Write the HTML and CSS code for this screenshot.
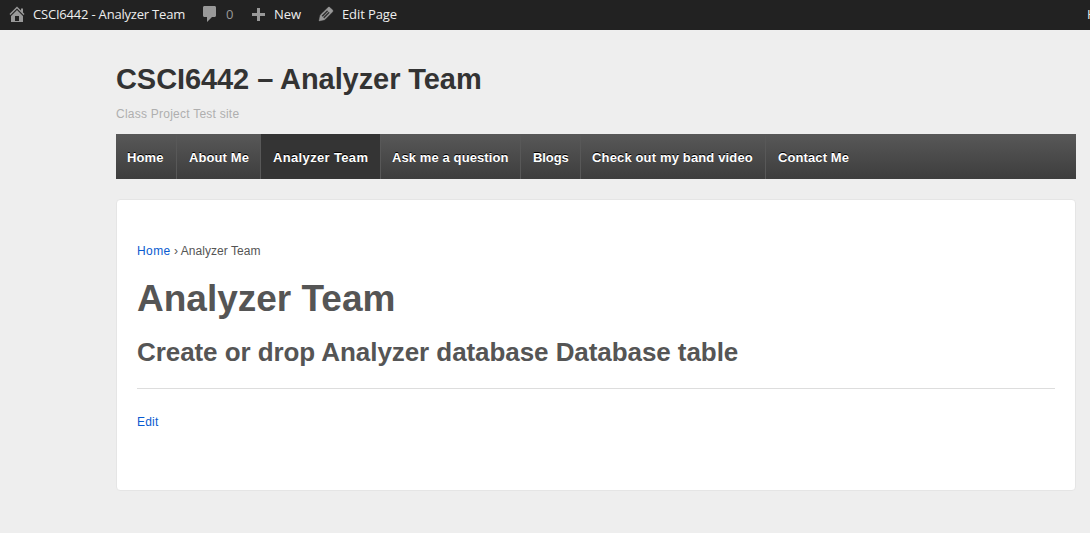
FILE: index.html
```
<!DOCTYPE html>
<html lang="en">
<head>
<meta charset="utf-8">
<title>CSCI6442 – Analyzer Team</title>
<link rel="stylesheet" href="styles.css">
</head>
<body>
<div class="adminbar">
  <a class="ab-item ab-site"><svg class="ab-icon" viewBox="0 0 20 20"><path d="M16 8.500l1.530 1.530-1.060 1.060L10 4.600l-6.470 6.490-1.060-1.060L10 2.500l4 4v-2h2v4zm-6-2.460l6 5.990V18H4v-5.970zM12 17v-5H8v5h4z"/></svg><span>CSCI6442 - Analyzer Team</span></a>
  <a class="ab-item ab-comments"><svg class="ab-icon" viewBox="0 0 20 20"><path d="M4.500 2h10c.900 0 1.500.600 1.500 1.500v8c0 .900-.600 1.500-1.500 1.500H12l-5 5v-5H4.500C3.600 13 3 12.400 3 11.500v-8C3 2.600 3.600 2 4.500 2z"/></svg><span>0</span></a>
  <a class="ab-item ab-new"><svg class="ab-icon" viewBox="0 0 20 20"><path d="M17 9v3h-5v5H9v-5H4V9h5V4h3v5h5z"/></svg><span>New</span></a>
  <a class="ab-item ab-edit"><svg class="ab-icon" viewBox="0 0 20 20"><path d="M13.890 3.390l2.710 2.720c.460.460.420 1.240.030 1.640l-8.010 8.020-5.560 1.160 1.160-5.580s7.600-7.630 7.990-8.030c.390-.390 1.220-.390 1.680.070zm-2.730 2.790l-5.590 5.610 1.110 1.110 5.540-5.650zm-2.970 8.230l5.580-5.600-1.070-1.080-5.590 5.600z"/></svg><span>Edit Page</span></a>
  <a class="ab-item ab-account">Howdy</a>
</div>
<div class="container">
  <header class="header">
    <div class="site-name">CSCI6442 – Analyzer Team</div>
    <div class="site-description">Class Project Test site</div>
    <nav class="menu"><a>Home</a><a>About Me</a><a class="current">Analyzer Team</a><a>Ask me a question</a><a>Blogs</a><a>Check out my band video</a><a>Contact Me</a></nav>
  </header>
  <main class="wrapper">
    <div class="breadcrumb"><a>Home</a> › Analyzer Team</div>
    <h1>Analyzer Team</h1>
    <h2>Create or drop Analyzer database Database table</h2>
    <div class="post-edit"><a>Edit</a></div>
  </main>
</div>
</body>
</html>
```
FILE: styles.css
```
* { box-sizing: border-box; }
html { background: #eee; }
body {
  margin: 0;
  height: 533px;
  overflow: hidden;
  background: #eee;
  color: #555;
  font: 12px/18px "Liberation Sans", Arial, sans-serif;
}
.adminbar {
  display: flex;
  height: 30px;
  overflow: hidden;
  background: #222;
  color: #eee;
  font: 13px/29px "Open Sans", sans-serif;
  white-space: nowrap;
}
.ab-item { display: flex; align-items: center; flex: none; height: 29px; }
.ab-icon { width: 20px; height: 20px; margin: 0 6px 1px 0; fill: #999; }
.ab-site { width: 193px; padding-left: 7px; letter-spacing: -0.2px; }
.ab-comments { width: 55px; padding-left: 7px; color: #999; }
.ab-new { width: 60px; }
.ab-edit { width: 90px; padding-left: 8px; letter-spacing: -0.1px; }
.ab-edit .ab-icon { stroke: #999; stroke-width: 0.4; }
.ab-account { margin-left: 689px; }
.container { width: 960px; margin-left: 116px; }
.header { padding-top: 30px; }
.site-name { color: #333; font-size: 29px; line-height: 38px; font-weight: bold; letter-spacing: -0.08px; }
.site-description { margin-top: 6px; height: 30px; line-height: 20px; letter-spacing: 0.24px; color: #afafaf; }
.menu {
  display: grid;
  grid-template-columns: 60px 84px 120px 140px 60px 185px 1fr;
  grid-template-rows: 45px;
  height: 45px;
  background: linear-gradient(#585858, #3d3d3d);
  color: #fff;
  font-size: 13px;
  font-weight: bold;
  letter-spacing: 0.1px;
  line-height: 45px;
  text-shadow: 0 -1px 0 #000;
  white-space: nowrap;
}
.menu a { padding: 1px 0 0 11px; border-left: 1px solid #585858; }
.menu a:first-child { border-left: 0; }
.menu a:nth-child(2), .menu a:last-child { padding-left: 12px; }
.menu a:nth-child(5) { padding-left: 12px; letter-spacing: -0.1px; }
.menu a:nth-child(6) { letter-spacing: 0.15px; }
.menu .current { padding-left: 12px; background: #343434; letter-spacing: 0.35px; }
.wrapper {
  height: 292px;
  margin-top: 20px;
  padding: 42px 20px 20px;
  background: #fff;
  border: 1px solid #e5e5e5;
  border-radius: 4px;
}
.breadcrumb { letter-spacing: 0.04px; }
.breadcrumb a { letter-spacing: 0.4px; }
.breadcrumb a, .post-edit a { color: #0a5bd0; }
.post-edit a { letter-spacing: 0.2px; }
h1 { margin: 16px 0 0; font-size: 37px; line-height: 46px; }
h2 { margin: 15px 0 0; font-size: 26px; line-height: 30px; letter-spacing: -0.07px; }
.post-edit { margin-top: 21px; padding-top: 24px; border-top: 1px solid #ddd; }
```
